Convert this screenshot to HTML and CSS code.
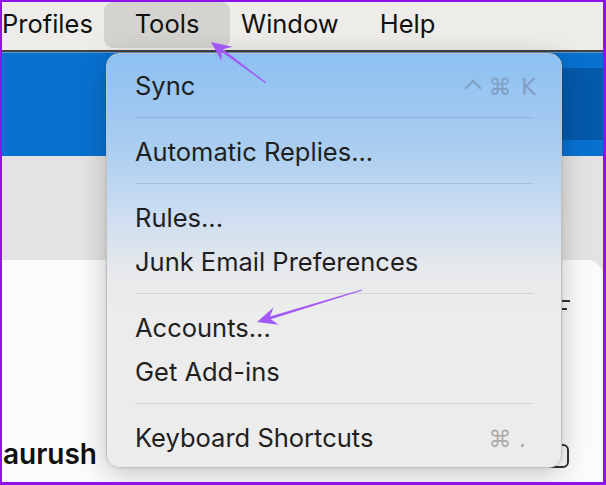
FILE: index.html
```html
<!DOCTYPE html>
<html>
<head>
<meta charset="utf-8">
<link rel="stylesheet" href="styles.css">
</head>
<body>
<div class="screen">
  <div class="menubar">
    <span class="mb-item mb-profiles">Profiles</span>
    <span class="mb-item mb-tools">Tools</span>
    <span class="mb-item mb-window">Window</span>
    <span class="mb-item mb-help">Help</span>
  </div>
  <div class="toolbar"><div class="toolbar-dark"></div></div>
  <div class="greybar"></div>
  <div class="content">
    <div class="glyph-row"><span class="glyph"></span></div>
    <div class="spacer"></div>
    <div class="bottom-row">
      <span class="name">aurush</span>
      <span class="box"></span>
    </div>
  </div>

  <div class="menu">
    <div class="item"><span>Sync</span><span class="sc sc-blue"><span class="caret"></span>⌘ K</span></div>
    <div class="sep"></div>
    <div class="item"><span>Automatic Replies...</span></div>
    <div class="sep"></div>
    <div class="item"><span>Rules...</span></div>
    <div class="item"><span>Junk Email Preferences</span></div>
    <div class="sep"></div>
    <div class="item"><span>Accounts...</span></div>
    <div class="item"><span>Get Add-ins</span></div>
    <div class="sep"></div>
    <div class="item"><span>Keyboard Shortcuts</span><span class="sc sc-grey">⌘ .</span></div>
  </div>

  <svg class="arrows" width="606" height="485" viewBox="0 0 606 485">
    <polygon fill="#a258f4" points="211,42 232.4,46.8 223.1,49.2 266.3,82.6 265.7,83.4 221.3,51.6 221.6,61.2"/>
    <polygon fill="#a258f4" points="257,322 273.5,307.6 270.0,316.5 361.9,289.5 362.1,290.5 270.8,319.3 278.7,324.8"/>
  </svg>
</div>
</body>
</html>
```

FILE: styles.css
```css
html, body {
  margin: 0;
  padding: 0;
}
body {
  width: 606px;
  height: 485px;
  overflow: hidden;
  font-family: Inter, "Noto Sans", sans-serif;
}
.screen {
  position: relative;
  width: 606px;
  height: 485px;
  box-sizing: border-box;
  border-style: solid;
  border-color: #8b14e6;
  border-width: 2px 3px 3px 2px;
  display: flex;
  flex-direction: column;
  overflow: hidden;
  background: #e4e3e1;
}
.menubar {
  height: 48px;
  flex: none;
  background: #edece8;
  border-bottom: 2px solid #424242;
  display: flex;
  align-items: flex-start;
  font-size: 25.5px;
  color: #111;
}
.mb-item {
  line-height: 44px;
  height: 46px;
  white-space: nowrap;
}
.mb-profiles {
  padding-left: 0;
  width: 102px;
}
.mb-tools {
  width: 126px;
  text-align: center;
  background: #d4d3cf;
  border-radius: 9px;
}
.mb-window {
  margin-left: 11px;
}
.mb-help {
  margin-left: 41px;
}
.toolbar {
  height: 104px;
  flex: none;
  background: #0871d0;
  border-top: 1px solid #5f97cf;
  box-sizing: border-box;
  padding-top: 15px;
}
.toolbar-dark {
  margin-left: 440px;
  height: 72px;
  background: #0559ab;
}
.greybar {
  height: 104px;
  flex: none;
  background: #e4e3e1;
}
.content {
  flex: 1;
  background: #fbfbfb;
  border-top-right-radius: 16px;
  display: flex;
  flex-direction: column;
  padding: 40px 0 14px 0;
}
.glyph-row {
  padding-left: 560px;
  height: 12px;
}
.glyph {
  display: block;
  width: 8px;
  height: 8px;
  border-top: 2px solid #333;
}
.glyph::after {
  content: "";
  display: block;
  width: 5px;
  margin-top: 6px;
  border-top: 2px solid #333;
}
.spacer {
  flex: 1;
}
.bottom-row {
  display: flex;
  align-items: flex-end;
}
.name {
  font-size: 28px;
  font-weight: 600;
  color: #111;
  line-height: 28px;
  margin-left: 1px;
  margin-bottom: 0;
}
.box {
  margin-left: auto;
  margin-right: 34px;
  width: 34px;
  height: 20px;
  border: 2px solid #333;
  border-radius: 6px;
}
.menu {
  position: absolute;
  left: 104px;
  top: 51px;
  width: 456px;
  height: 415px;
  box-sizing: border-box;
  border-radius: 13px;
  border: 1px solid #c2c2c2;
  background: linear-gradient(180deg, #8dc0f2 0%, #a9cdf0 22%, #cfdef0 40%, #e6e8eb 52%, #ececec 62%, #ececec 100%);
  box-shadow: 0 6px 28px rgba(0, 0, 0, 0.22), 0 0 2px rgba(0, 0, 0, 0.15);
  padding: 10px 0 0 0;
  font-size: 25.5px;
  color: #1f1f1f;
}
.item {
  display: flex;
  justify-content: space-between;
  align-items: baseline;
  height: 44px;
  line-height: 44px;
  padding: 0 25px 0 28px;
  white-space: nowrap;
}
.sc {
  font-family: "DejaVu Sans", sans-serif;
  font-size: 23px;
}
.sc-blue {
  color: #7f9fc4;
  word-spacing: 2px;
}
.caret {
  display: inline-block;
  width: 10px;
  height: 10px;
  border-left: 2.5px solid #7f9fc4;
  border-top: 2.5px solid #7f9fc4;
  transform: rotate(45deg);
  margin-right: 10px;
  vertical-align: 1px;
}
.sc-grey {
  color: #ababab;
  margin-right: 10px;
}
.sep {
  height: 1px;
  background: rgba(0, 0, 0, 0.1);
  margin: 9px 27px 12px 28px;
}
.arrows {
  position: absolute;
  left: -2px;
  top: -2px;
  pointer-events: none;
}
```
